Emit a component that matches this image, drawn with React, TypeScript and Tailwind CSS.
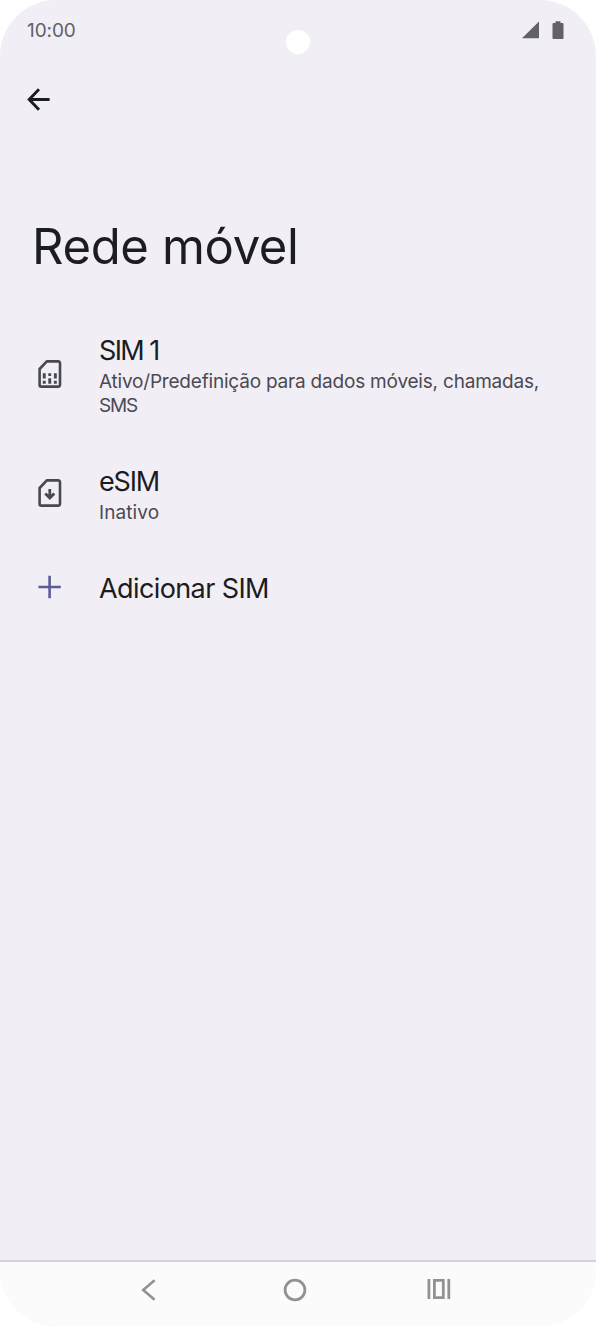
import type { ReactNode } from "react";

function StatusBar() {
  return (
    <div className="flex h-[60px] items-start justify-between pl-[27px] pr-[32px]">
      <span className="mt-[17px] text-[19px] leading-[27px] tracking-[-0.1px] text-[#626166]">10:00</span>
      <div className="mt-[21px] flex items-start gap-[13px] text-[#626166]">
        <svg width="17" height="18" viewBox="0 0 17 18" fill="currentColor">
          <path d="M17 0.5V17.3H0Z" />
        </svg>
        <svg width="12" height="18" viewBox="0 0 12 18" fill="currentColor">
          <path d="M3.5 0.3h5V2h2a1 1 0 0 1 1 1v14a1 1 0 0 1-1 1h-9a1 1 0 0 1-1-1V3a1 1 0 0 1 1-1h2Z" />
        </svg>
      </div>
    </div>
  );
}

function SimIcon() {
  return (
    <svg width="24" height="28" viewBox="0 0 24 28" fill="none">
      <path
        d="M8.8 1.4H20.6A1.6 1.6 0 0 1 22 3V25A1.6 1.6 0 0 1 20.6 26.6H3.2A1.6 1.6 0 0 1 1.6 25V9Z"
        stroke="#49474f"
        strokeWidth="2.6"
        strokeLinejoin="round"
      />
      <path
        d="M4.8 13.2h2.9v5.2H4.8ZM4.8 20.8h2.9v2.9H4.8ZM10.3 13.2h2.9v2.9h-2.9ZM10.3 18.3h2.9v5.4h-2.9ZM15.9 13.2h2.9v5.2h-2.9ZM15.9 20.8h2.9v2.9h-2.9Z"
        fill="#49474f"
      />
    </svg>
  );
}

function EsimIcon() {
  return (
    <svg width="24" height="28" viewBox="0 0 24 28" fill="none" stroke="#49474f">
      <path
        d="M8.8 1.4H20.6A1.6 1.6 0 0 1 22 3V25A1.6 1.6 0 0 1 20.6 26.6H3.2A1.6 1.6 0 0 1 1.6 25V9Z"
        strokeWidth="2.6"
        strokeLinejoin="round"
      />
      <path d="M11.8 10v9M7.3 14.5l4.5 4.6 4.5-4.6" strokeWidth="2.8" />
    </svg>
  );
}

function PlusIcon() {
  return (
    <svg width="24" height="24" viewBox="0 0 24 24" stroke="#5b5d96" strokeWidth="2.6">
      <path d="M11.6 0.8v22.4M0.4 12h22.4" />
    </svg>
  );
}

type ItemProps = {
  icon: ReactNode;
  title: string;
  titleClass: string;
  children?: ReactNode;
};

function Item({ icon, title, titleClass, children }: ItemProps) {
  return (
    <li className="flex items-center">
      <div className="-mt-1 w-[61px] shrink-0">{icon}</div>
      <div>
        <h2 className={`text-[27px] leading-9 text-[#1b1b20] ${titleClass}`}>{title}</h2>
        {children}
      </div>
    </li>
  );
}

function NavBar() {
  return (
    <nav className="flex h-[66px] items-start border-t-2 border-[#d6d3dc] bg-[#fbfbfb] pl-[141px] text-[#929292]">
      <svg className="mt-[17px]" width="16" height="22" viewBox="0 0 16 22" fill="none" stroke="currentColor" strokeWidth="2.6">
        <path d="M13.6 1.2 2.2 11 13.6 20.8" />
      </svg>
      <svg className="ml-[126px] mt-[16px]" width="24" height="24" viewBox="0 0 24 24" fill="none" stroke="currentColor" strokeWidth="2.8">
        <circle cx="12" cy="12" r="9.9" />
      </svg>
      <svg className="ml-[120px] mt-[17px]" width="24" height="20" viewBox="0 0 24 20" fill="none" stroke="currentColor" strokeWidth="2.8">
        <path d="M1.9 0v20M21.8 0v20M7.4 1.4h8.9v17.2H7.4Z" />
      </svg>
    </nav>
  );
}

export default function App() {
  return (
    <div className="h-[1326px] w-[596px] overflow-hidden bg-white font-['Inter',sans-serif]">
      <div className="relative flex h-full flex-col overflow-hidden rounded-[56px] bg-[#f1eef6]">
        <StatusBar />
        {/* camera hole */}
        <div className="absolute left-[286px] top-[30px] size-6 rounded-full bg-white" />

        <header className="pl-[27px] pt-[28px]">
          <svg width="24" height="23" viewBox="0 0 24 23" fill="none" stroke="#1d1c21" strokeWidth="2.9">
            <path d="M22.6 11.5H2.5M12 1.3 2.2 11.5 12 21.7" />
          </svg>
        </header>

        <main className="flex-1">
          <h1 className="ml-[32px] mt-[106px] whitespace-nowrap text-[49px] leading-[60px] tracking-[-0.35px] text-[#1d1c22]">
            Rede móvel
          </h1>
          <ul className="mt-[56px] flex flex-col gap-[46px] pl-[38px]">
            <Item icon={<SimIcon />} title="SIM 1" titleClass="tracking-[-1.6px]">
              <p className="mt-px whitespace-nowrap text-[19px] leading-6 text-[#4b4951]">
                <span className="tracking-[-0.2px]">Ativo/Predefinição para dados móveis, chamadas,</span>
                <br />
                <span className="tracking-[-1.2px]">SMS</span>
              </p>
            </Item>
            <Item icon={<EsimIcon />} title="eSIM" titleClass="tracking-[-1.2px]">
              <p className="mt-px text-[19px] leading-6 tracking-[0.1px] text-[#4b4951]">Inativo</p>
            </Item>
            <Item icon={<PlusIcon />} title="Adicionar SIM" titleClass="tracking-[-0.6px]" />
          </ul>
        </main>

        <NavBar />
      </div>
    </div>
  );
}
